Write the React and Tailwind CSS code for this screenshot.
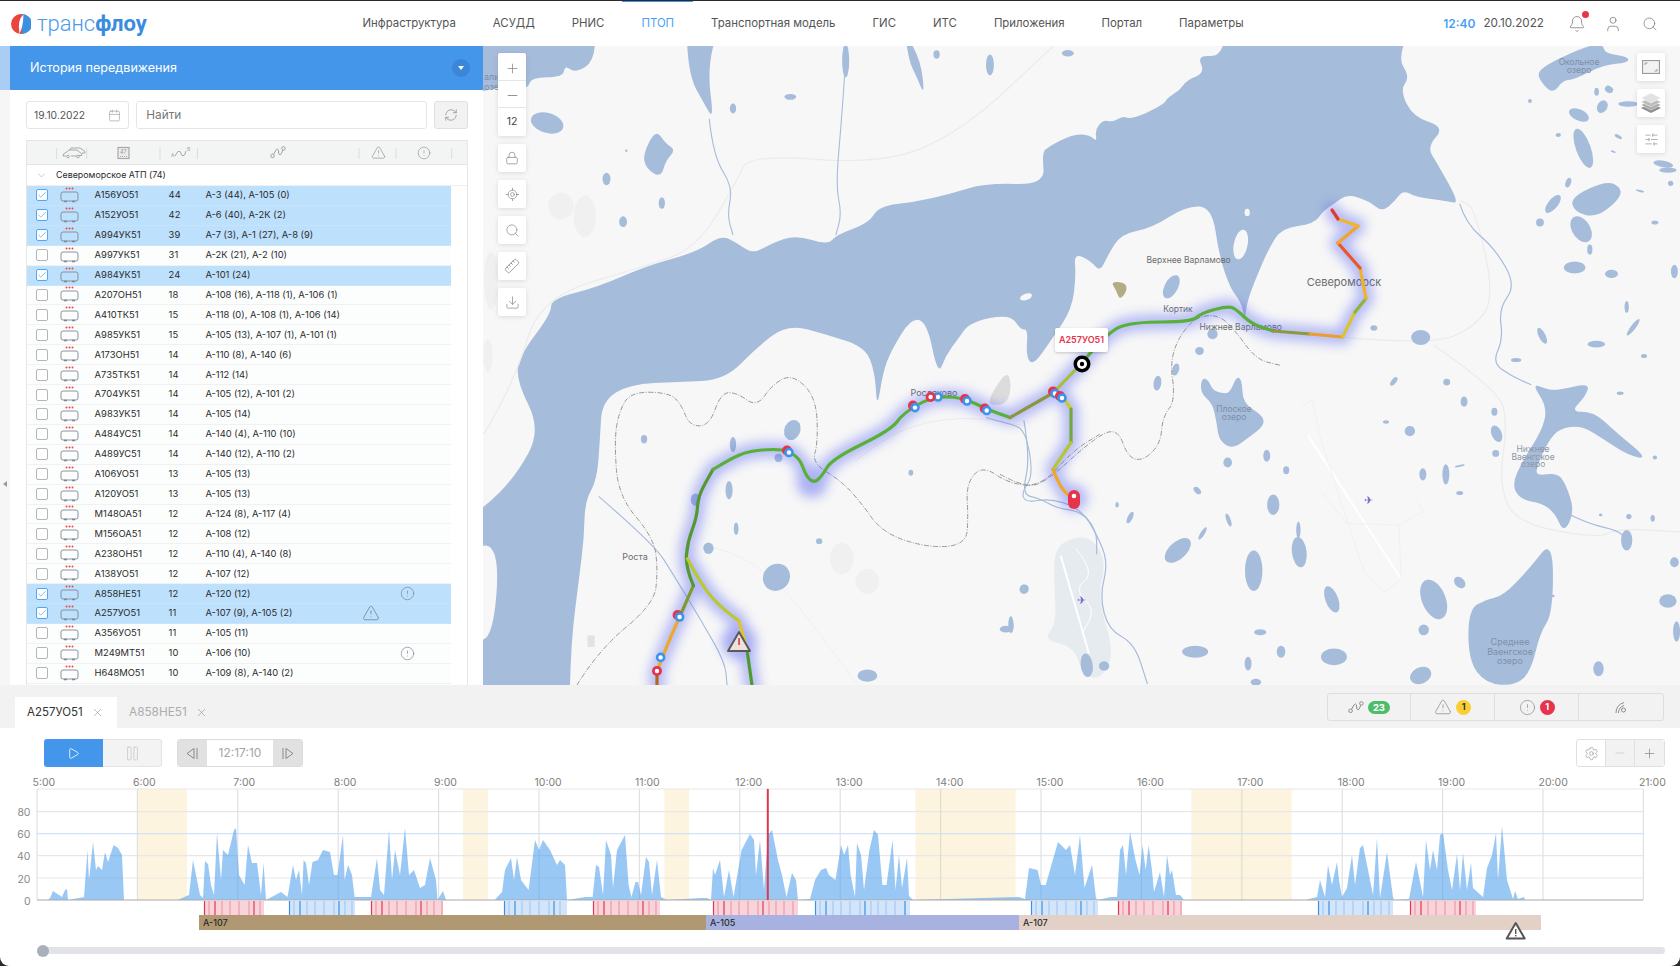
/**
 * История передвижения - ПТОП screen: vehicle list, map and speed timeline
 */
import React from 'react';
import {
  Plus, Minus, Lock, LocateFixed, Search, Ruler, Download, Bell, User, RefreshCw,
  Calendar, X, Play, Pause, Settings, TriangleAlert, CircleAlert, ChevronDown,
  SlidersHorizontal, Check,
} from 'lucide-react';

const NAV = ['Инфраструктура', 'АСУДД', 'РНИС', 'ПТОП', 'Транспортная модель', 'ГИС', 'ИТС', 'Приложения', 'Портал', 'Параметры'];

const ROWS = [
  ['А156УО51', 44, 'А-3 (44), А-105 (0)', 1],
  ['А152УО51', 42, 'А-6 (40), А-2К (2)', 1],
  ['А994УК51', 39, 'А-7 (3), А-1 (27), А-8 (9)', 1],
  ['А997УК51', 31, 'А-2К (21), А-2 (10)', 0],
  ['А984УК51', 24, 'А-101 (24)', 1],
  ['А207ОН51', 18, 'А-108 (16), А-118 (1), А-106 (1)', 0],
  ['А410ТК51', 15, 'А-118 (0), А-108 (1), А-106 (14)', 0],
  ['А985УК51', 15, 'А-105 (13), А-107 (1), А-101 (1)', 0],
  ['А173ОН51', 14, 'А-110 (8), А-140 (6)', 0],
  ['А735ТК51', 14, 'А-112 (14)', 0],
  ['А704УК51', 14, 'А-105 (12), А-101 (2)', 0],
  ['А983УК51', 14, 'А-105 (14)', 0],
  ['А484УС51', 14, 'А-140 (4), А-110 (10)', 0],
  ['А489УС51', 14, 'А-140 (12), А-110 (2)', 0],
  ['А106УО51', 13, 'А-105 (13)', 0],
  ['А120УО51', 13, 'А-105 (13)', 0],
  ['М148ОА51', 12, 'А-124 (8), А-117 (4)', 0],
  ['М156ОА51', 12, 'А-108 (12)', 0],
  ['А238ОН51', 12, 'А-110 (4), А-140 (8)', 0],
  ['А138УО51', 12, 'А-107 (12)', 0],
  ['А858НЕ51', 12, 'А-120 (12)', 1, 'info'],
  ['А257УО51', 11, 'А-107 (9), А-105 (2)', 1, 'warn'],
  ['А356УО51', 11, 'А-105 (11)', 0],
  ['М249МТ51', 10, 'А-106 (10)', 0, 'info'],
  ['Н648МО51', 10, 'А-109 (8), А-140 (2)', 0],
  ['', '', '', 0],
];

function BusIcon() {
  return (
    <svg width="19" height="17" viewBox="0 0 19 17" fill="none">
      <circle cx="6.5" cy="1.5" r="1" fill="#ef4444" />
      <circle cx="9.5" cy="1.5" r="1" fill="#ef4444" />
      <circle cx="12.5" cy="1.5" r="1" fill="#ef4444" />
      <path d="M3 5h13q2 0 2 2v5q0 2-2 2H3q-2 0-2-2V7q0-2 2-2z" stroke="#7d8894" strokeWidth="0.9" />
      <path d="M4 14.500h3M12 14.500h3" stroke="#7d8894" strokeWidth="1.300" />
    </svg>
  );
}

function RouteGlyph({ size = 16 }) {
  return (
    <svg width={size} height={size * 0.8} viewBox="0 0 16 13" fill="none" stroke="currentColor" strokeWidth="1">
      <circle cx="2.500" cy="10" r="1.800" />
      <circle cx="13.500" cy="2.500" r="1.800" />
      <path d="M3.500 8.500L6 4q1.500-2 2.500 0l.3 4q1 2 2.500 0L12.800 4.300" />
    </svg>
  );
}

function CheckBox({ checked }) {
  return (
    <div className={`w-[12px] h-[12px] rounded-[2px] border flex items-center justify-center bg-white ${checked ? 'border-[#55a5f0]' : 'border-[#b5b5b5]'}`}>
      {checked ? <Check size={10} strokeWidth={1.5} className="text-[#3f94ea]" /> : null}
    </div>
  );
}

function VehicleRow({ row }) {
  const [plate, count, routes, checked, flag] = row;
  return (
    <div className={`w-[424px] grid grid-cols-[33px_34.6px_74px_36.8px_150.6px_30px_44px] items-center h-[19.92px] shrink-0 border-b text-[9.400px] text-[#2b2b2b] ${checked ? 'bg-[#bde0fd] border-[#c6e4fd]' : 'bg-[#fcfdfd] border-[#f1f1f1]'}`}>
      <div className="pl-[9px]"><CheckBox checked={checked} /></div>
      <BusIcon />
      <div>{plate}</div>
      <div>{count}</div>
      <div className="whitespace-nowrap">{routes}</div>
      <div className="flex justify-center">{flag === 'warn' ? <TriangleAlert size={18} strokeWidth={1} className="text-[#6f7d8b]" /> : null}</div>
      <div className="flex justify-center">{flag === 'info' ? <CircleAlert size={15} strokeWidth={1} className="text-[#6f7d8b]" /> : null}</div>
    </div>
  );
}

function TableHead() {
  return (
    <div className="relative h-[24px] shrink-0 bg-[#f3f4f4] border-b border-[#e4e4e4] text-[#a3a3a3]">
      <svg className="absolute inset-0" width="442" height="24" viewBox="26 140 442 24" fill="none" stroke="#a8a8a8" strokeWidth="1">
        {[55.7, 85.7, 159, 196.4, 358, 395, 450.7].map((x) => (
          <line key={x} x1={x} x2={x} y1="147" y2="158" stroke="#dcdcdc" />
        ))}
        <path d="M62 155q0-3 3-3.500l3-2.500h8l3 2.500q2 0.500 2 3h-3M62 155h3M70 155h6" />
        <path d="M69 149l1-2h9l3 2q2 .5 2 3h-3" />
        <circle cx="67" cy="155.500" r="1.300" /><circle cx="77" cy="155.500" r="1.300" />
        <rect x="117" y="146.500" width="11" height="11" strokeWidth="1.200" fill="#ececec" />
        <path d="M119 155.500h7" strokeDasharray="1 1" />
        <path d="M174 155l2.500-4q1.500-1.500 3 0l1 3q1.500 1.500 3 0l1.500-4" />
        <text x="170" y="156" fontSize="5" fill="#a8a8a8" stroke="none">A</text>
        <text x="186" y="150" fontSize="5" fill="#a8a8a8" stroke="none">B</text>
        <text x="119" y="152.500" fontSize="5.500" fill="#999" stroke="none">47</text>
      </svg>
      <div className="absolute left-[243px] top-[5px] text-[#a0a0a0]"><RouteGlyph size={16} /></div>
      <TriangleAlert size={15} strokeWidth={1} className="absolute left-[343.500px] top-[3.500px] text-[#8b8b8b]" />
      <CircleAlert size={14} strokeWidth={1} className="absolute left-[390px] top-[4.500px] text-[#8b8b8b]" />
    </div>
  );
}

function SidePanel() {
  return (
    <div className="w-[483px] h-full shrink-0 flex bg-[#f6f6f6]">
      <div className="w-[10px] h-full shrink-0 flex flex-col relative">
        <div className="h-[44px] bg-[#a9cdf3]" />
        <div className="absolute left-[3px] top-[435px] w-0 h-0 border-y-[3px] border-y-transparent border-r-[4px] border-r-[#9a9a9a]" />
      </div>
      <div className="flex-1 min-w-0 flex flex-col bg-white overflow-hidden">
        <div className="h-[44px] shrink-0 bg-[#4496ea] flex items-center pl-[20px] pr-[13px] justify-between">
          <span className="text-white text-[12.600px]">История передвижения</span>
          <div className="w-[18px] h-[18px] rounded-full bg-[#3a86d8] flex items-center justify-center">
            <div className="w-0 h-0 border-x-[3.500px] border-x-transparent border-t-[4px] border-t-white" />
          </div>
        </div>
        <div className="flex-1 min-h-0 flex flex-col pt-[11px] pl-[16px] pr-[15px]">
          <div className="flex gap-[7.500px] h-[28px] shrink-0">
            <div className="w-[103px] border border-[#e5e5e5] rounded-[3px] flex items-center justify-between px-[7px] pt-px text-[10.300px] text-[#555]">
              <span>19.10.2022</span>
              <Calendar size={13} strokeWidth={1} className="text-[#8a8a8a]" />
            </div>
            <div className="w-[291px] border border-[#e5e5e5] rounded-[3px] flex items-center px-[9px] pt-px text-[11.800px] text-[#777]">Найти</div>
            <div className="w-[34px] border border-[#e0e0e0] rounded-[3px] bg-[#f2f2f2] flex items-center justify-center">
              <RefreshCw size={14} strokeWidth={1.200} className="text-[#8b8b8b]" />
            </div>
          </div>
          <div className="mt-[11px] flex-1 min-h-0 flex flex-col border-x border-t border-[#e6e6e6] overflow-hidden">
            <TableHead />
            <div className="h-[21px] shrink-0 flex items-center border-b border-[#f0f0f0] text-[8.900px] text-[#2b2b2b]">
              <ChevronDown size={11} strokeWidth={1} className="ml-[9px] mr-[9px] text-[#8a8a8a]" />
              <span>Североморское АТП (74)</span>
            </div>
            {ROWS.map((r, i) => <VehicleRow key={i} row={r} />)}
          </div>
        </div>
      </div>
    </div>
  );
}

const LAKES_Z7 = [
  [395, 375, 16, 36, 20], [405, 620, 8, 18, 10], [363, 660, 9, 22, 5], [490, 515, 12, 15, 0], [460, 565, 10, 12, 0],
  [970, 525, 22, 22, 0], [862, 497, 8, 8, 0], [908, 655, 6, 14, 30], [1030, 657, 8, 10, 0], [1070, 715, 8, 15, 0],
  [945, 802, 12, 15, 0], [890, 775, 7, 5, 0], [1140, 745, 7, 12, 0], [1145, 810, 12, 25, -15], [1143, 868, 8, 10, 0],
  [1028, 930, 8, 30, 0], [975, 930, 8, 18, 0], [1060, 985, 8, 6, 0], [615, 875, 8, 18, 0], [525, 895, 10, 15, 0],
  [660, 918, 7, 12, 0], [455, 978, 7, 12, -30], [630, 1020, 14, 30, 0], [300, 1058, 6, 18, 20], [270, 1020, 4, 8, 0],
  [527, 1065, 5, 20, -15], [467, 1105, 5, 20, 25], [410, 1155, 22, 42, 35], [585, 1215, 20, 60, 0], [690, 1160, 17, 45, -5],
  [688, 1095, 5, 25, 0], [765, 1300, 15, 40, -15], [1000, 1300, 28, 60, -15], [1060, 1250, 12, 18, -25], [977, 1390, 12, 16, 0],
  [600, 1397, 14, 9, 0], [450, 1455, 30, 18, 0], [770, 1470, 30, 25, 0], [648, 1455, 10, 18, 0], [572, 1490, 8, 20, 0],
  [1380, 1505, 12, 22, 0], [970, 1525, 28, 22, -50], [1540, 1305, 20, 20, 0], [1560, 1395, 8, 30, 0], [1445, 1125, 13, 30, 0],
  [1555, 1190, 10, 15, 0], [1505, 1060, 5, 10, 0], [1450, 1055, 6, 8, 0], [1360, 265, 6, 15, 0], [1250, 520, 8, 25, -20],
  [1340, 205, 22, 40, -20], [1325, 318, 25, 18, 0], [1410, 337, 15, 12, 0], [1445, 435, 5, 18, 0], [1460, 495, 6, 28, 30],
  [1245, 185, 9, 12, 0], [1275, 130, 12, 30, 30], [1375, 545, 20, 10, 0], [1540, 30, 20, 8, 0], [1190, 592, 12, 6, 0],
  [1485, 580, 7, 6, 0], [1510, 185, 8, 6, 0], [1430, 690, 8, 5, 0], [1555, 330, 8, 20, 0], [1510, 880, 5, 6, 0],
  [55, 1270, 10, 14, 0], [25, 1375, 6, 25, 0], [200, 1495, 14, 35, -5], [240, 1497, 12, 14, 0],
  [590, 1545, 12, 10, 0], [1385, 1050, 4, 4, 0], [1275, 1290, 4, 4, 0], [1060, 905, 12, 3, -15],
];

const LAKES_Z6 = [
  [170, 200, 42, 24, 15], [925, 50, 9, 40, 0], [1155, 35, 8, 10, 0], [1290, 60, 10, 25, 0], [1487, 32, 15, 8, 0],
  [640, 165, 8, 12, 0], [785, 137, 15, 7, 0], [320, 335, 10, 15, 0], [460, 393, 8, 14, 0], [362, 438, 10, 13, 0],
  [370, 267, 3, 3, 0], [790, 940, 20, 25, 25], [640, 975, 8, 18, 0], [415, 962, 8, 10, 0], [630, 1085, 9, 22, 0],
  [545, 1108, 12, 15, 0], [648, 1178, 6, 15, 0], [578, 1225, 13, 14, 0], [750, 1295, 35, 32, -30], [1090, 1043, 6, 7, 0],
  [858, 1208, 8, 7, 0], [1378, 1323, 10, 10, 0], [1330, 1420, 15, 8, 0], [1345, 1412, 5, 15, 0], [980, 1532, 25, 15, 0],
  [755, 1007, 10, 10, 0], [1535, 1510, 10, 25, 0],
];

const LAKES_Z3 = [
  [1137, 345, 32, 17, 25], [1190, 275, 7, 12, 0], [1227, 268, 13, 10, 30], [1207, 320, 15, 20, 30], [1285, 312, 30, 8, 0],
  [1150, 445, 22, 62, -20], [1075, 405, 8, 6, 0], [1255, 410, 12, 5, 30], [1390, 492, 30, 10, 10], [1412, 550, 8, 8, 0],
  [990, 303, 6, 6, 0], [1240, 455, 8, 3, 20], [1105, 548, 8, 15, 20], [1320, 573, 13, 3, 15],
];

const GREEN = '#58b036';
const SEGS = [
  [[[657, 690], [657, 671]], '#b4661f'],
  [[[657, 671], [668, 643], [679.600, 617]], '#eda92a'],
  [[[679.600, 617], [693.400, 585.600]], '#7f9a2f'],
  [[[693.400, 585.600], [685.500, 567], [687.500, 542], [697, 517], [698, 496], [713, 469.500]], '#55982f'],
  [[[713, 469.500], [730, 459], [749, 451], [775, 449], [788, 451], [800, 459], [806, 476], [814, 483], [822, 476], [832, 459], [891, 430], [903, 413.500], [930.600, 397], [962, 397], [986, 409], [1010, 417.600]], GREEN],
  [[[1010, 417.600], [1053, 393]], '#8d963f'],
  [[[1063, 397], [1071, 409]], '#c9c932'],
  [[[1071, 409], [1071, 442.500]], '#73a93a'],
  [[[1071, 442.500], [1053, 469.500]], '#b6c436'],
  [[[1053, 469.500], [1060, 488], [1073, 498.500]], '#efa62a'],
  [[[1053, 393], [1082, 363]], '#a5bf38'],
  [[[1082, 363], [1108, 331], [1134, 322], [1191, 322], [1201.600, 313], [1227.700, 306], [1236, 309], [1251.500, 324], [1273, 331]], GREEN],
  [[[1273, 331], [1310, 334]], '#8e9a3a'],
  [[[1310, 334], [1342.600, 337]], '#ec9f2a'],
  [[[1342.600, 337], [1355, 312]], '#d9c431'],
  [[[1355, 312], [1366, 298.600]], '#8fb338'],
  [[[1366, 298.600], [1360, 268]], '#edb32c'],
  [[[1360, 268], [1338, 243]], '#e9582c'],
  [[[1338, 243], [1358, 226]], '#f0a52b'],
  [[[1358, 226], [1338, 219]], '#f0b52c'],
  [[[1338, 219], [1332, 210]], '#e5392f'],
  [[[687.500, 558.700], [701, 583.600], [717, 604], [739, 621]], '#b9c92f'],
  [[[739, 621], [747, 650]], '#dcc52e'],
  [[[747, 650], [752.700, 690]], '#4f9a2f'],
];

const PINS = [
  [789, 452.500, 1], [915, 407.600, 1], [938, 397, 2], [930.600, 397, 0], [967, 401, 1], [986.700, 410.500, 1],
  [1055, 393.500, 1], [1062, 398, 1], [679.600, 617, 1], [660.600, 657.400, 2], [657, 671, 0],
];

const parse = (s) => s.trim().split(/\s+/).map((p) => p.split(',').map(Number));
const mid = (a, b) => [(a[0] + b[0]) / 2, (a[1] + b[1]) / 2];

// Скругляет ломаную: углы становятся кривыми через середины сторон
function smooth(points, closed) {
  const p = typeof points === 'string' ? parse(points) : points;
  if (p.length < 3) return `M${p.map((q) => q.join(' ')).join('L')}`;
  if (closed) {
    const first = mid(p[p.length - 1], p[0]);
    let d = `M${first[0]} ${first[1]}`;
    p.forEach((q, i) => {
      const m = mid(q, p[(i + 1) % p.length]);
      d += `Q${q[0]} ${q[1]} ${m[0]} ${m[1]}`;
    });
    return `${d}Z`;
  }
  let d = `M${p[0][0]} ${p[0][1]}`;
  for (let i = 1; i < p.length - 1; i += 1) {
    const m = mid(p[i], p[i + 1]);
    d += `Q${p[i][0]} ${p[i][1]} ${m[0]} ${m[1]}`;
  }
  const last = p[p.length - 1];
  return `${d}L${last[0]} ${last[1]}`;
}

const Blob = ({ points, fill }) => <path d={smooth(points, true)} fill={fill} />;
const Line = ({ points, ...rest }) => <path d={smooth(points, false)} fill="none" vectorEffect="non-scaling-stroke" {...rest} />;

function Pin({ x, y, kind }) {
  if (kind === 0) {
    return (
      <g>
        <circle cx={x} cy={y} r="5" fill="#e6344c" />
        <circle cx={x} cy={y} r="2.200" fill="#fff" />
      </g>
    );
  }
  return (
    <g>
      {kind === 1 ? <circle cx={x - 2} cy={y - 2} r="5" fill="#e6344c" /> : null}
      <circle cx={x} cy={y} r="4.800" fill="#3d93ea" />
      <circle cx={x} cy={y} r="2.200" fill="#fff" />
    </g>
  );
}

function MapCanvas() {
  const W = '#a6bcdb';
  const T = { fontSize: 9, fill: '#6d6d6d', textAnchor: 'middle' };
  const LIGHT = '#ebebeb';
  return (
    <svg className="absolute inset-0 w-full h-full" viewBox="483 46 1197 639" preserveAspectRatio="none" fill="none">
      <defs>
        <filter id="blur" x="-20%" y="-20%" width="140%" height="140%"><feGaussianBlur stdDeviation="6" /></filter>
      </defs>
      <rect x="483" y="46" width="1197" height="639" fill="#f7f7f7" />
      {/* залив */}
      <Blob fill={W} points="551,299 598,287 646,266 697,252 721,235 737,243 753,254 772,243 796,235 828,245 836,235 869,223 879,206 915,202 950,194 986,183 1045,185 1042,153 1048,147 1073,134 1090,135 1097,142 1095,130 1103,120 1113,122 1123,116 1130,119 1147,113 1165,103 1167,98 1180,90 1187,80 1205,73 1197,55 1223,57 1228,10 1420,10 1397,57 1410,77 1400,90 1413,117 1445,127 1427,147 1437,163 1460,204 1447,201 1416,197 1403,190 1395,201 1382,212 1369,201 1347,194 1334,204 1323,211 1314,224 1282,228 1269,248 1256,278 1247,302 1245,320 1241,302 1230,288 1219,255 1212,207 1186,206 1152,228 1121,234 1108,255 1100,272 1091,261 1074,253 1076,275 1072,309 1052,339 1033,366 1026,356 1028,329 1021,330 1010,314 970,322 958,339 946,355 938,376 927,322 911,318 891,351 883,372 877,410 875,372 865,347 828,335 788,324 757,347 725,380 678,382 630,384 602,401 600,438 597,480 585,501 584,538 579,579 571,642 569,730 430,730 430,545 483,509 516,476 541,430 516,380 520,355 551,314" />
      <Blob fill="#f7f7f7" points="470,545 500,546 493,640 470,640" />
      <g fill="#f7f7f7" transform="translate(1000 160) scale(0.4337 0.338)">
        <ellipse cx="555" cy="250" rx="16" ry="44" transform="rotate(8 555 250)" />
        <ellipse cx="60" cy="405" rx="15" ry="9" transform="rotate(-30 60 405)" />
        <ellipse cx="570" cy="155" rx="6" ry="11" />
      </g>
      {/* леса и дороги */}
      <g transform="translate(480 40) scale(0.3953 0.4149)">
        <g fill="#f0f0f0">
          <ellipse cx="205" cy="400" rx="32" ry="32" />
          <ellipse cx="265" cy="425" rx="28" ry="50" />
          <ellipse cx="28" cy="580" rx="18" ry="70" />
          <ellipse cx="20" cy="760" rx="12" ry="40" />
          <ellipse cx="915" cy="1250" rx="30" ry="38" />
          <ellipse cx="980" cy="1305" rx="30" ry="30" />
        </g>
        <Blob fill="#dcdcdc" points="1295,850 1335,795 1345,840 1330,880 1285,880" />
        <rect x="272" y="1435" width="18" height="28" fill="#e2e2e2" />
        <Line points="10,950 90,820 150,620 420,545 550,500 650,340 680,275 1020,300 1220,220 1450,15" stroke={LIGHT} strokeWidth="1.200" />
        <Line points="560,1220 700,1230 960,1560" stroke="#f0f0f0" strokeWidth="1" />
        <Line points="950,1015 1040,940 1220,905 1380,930" stroke={LIGHT} strokeWidth="1" />
      </g>
      <g transform="translate(1000 160) scale(0.4337 0.338)">
        <Line points="790,525 1000,548 1100,490 1140,400 1095,140 1060,120" stroke={LIGHT} strokeWidth="1.200" />
        <Line points="1000,548 1150,680 1170,780 1150,960 1190,1075 1380,1120 1420,1090 1568,1100" stroke={LIGHT} strokeWidth="1.200" />
        {/* аэродромы */}
        <Blob fill="#e6ebf0" points="125,1150 170,1115 215,1120 245,1190 225,1300 265,1460 230,1540 190,1520 170,1440 100,1420 130,1370 125,1260" />
        <line x1="140" y1="1170" x2="205" y2="1460" stroke="#fff" strokeWidth="2" vectorEffect="non-scaling-stroke" />
        <Line points="175,1150 220,1220 170,1270 220,1330 190,1400" stroke="#fff" strokeWidth="1" />
        <line x1="710" y1="815" x2="925" y2="1240" stroke="#fff" strokeWidth="2.200" vectorEffect="non-scaling-stroke" />
        <polyline points="695,730 720,710 740,830 840,1220 885,1280 925,1240 920,1080 975,1040 960,1005" stroke="#f1f1f1" strokeWidth="1" vectorEffect="non-scaling-stroke" />
        <polyline points="740,980 800,1075 920,1080" stroke="#f1f1f1" strokeWidth="1" vectorEffect="non-scaling-stroke" />
      </g>
      {/* озёра и реки */}
      <g transform="translate(480 40) scale(0.3953 0.4149)" fill={W}>
        <Blob fill={W} points="-80,-60 290,-60 292,50 240,80 215,60 210,90 130,90 120,120 60,110 8,125 -80,125" />
        <Blob fill={W} points="520,-40 605,-40 575,70 592,195 565,150 530,90" />
        <Blob fill={W} points="1075,-20 1115,50 1125,135 1105,90 1085,50" />
        <Blob fill={W} points="445,215 470,250 495,265 470,290 458,332 420,310 412,275" />
        {LAKES_Z6.map(([x, y, rx, ry, r], i) => (
          <ellipse key={i} cx={x} cy={y} rx={rx} ry={ry} transform={`rotate(${r} ${x} ${y})`} />
        ))}
        <g stroke={W} strokeWidth="1.100" strokeLinejoin="round">
          <Line points="580,190 590,280 640,355 625,420 640,470" />
          <Line points="925,50 915,190 900,350 915,420 900,470" />
          <Line points="300,1100 440,1215 490,1290 560,1400 620,1500 625,1555" />
          <Line points="1280,910 1340,925 1380,940 1400,1050 1370,1090 1380,1115 1440,1105 1510,1125 1560,1180 1560,1240" />
        </g>
      </g>
      <g transform="translate(1000 160) scale(0.4337 0.338)" fill={W}>
        <Blob fill={W} points="465,645 480,650 490,680 510,690 530,690 545,640 558,650 560,720 605,755 610,785 570,825 535,855 505,830 500,780 490,720 462,690" />
        <Blob fill={W} points="1275,1120 1275,1340 1245,1400 1225,1510 1190,1555 1120,1550 1080,1480 1080,1330 1120,1300 1160,1290 1220,1210" />
        <Blob fill={W} points="1225,660 1265,680 1290,680 1360,660 1350,700 1315,745 1370,745 1420,805 1495,885 1450,875 1390,825 1340,785 1290,795 1265,830 1240,900 1235,935 1285,925 1305,960 1325,1040 1300,1105 1280,1045 1250,1015 1200,1005 1180,960 1205,890 1250,800 1262,730" />
        <Blob fill={W} points="1315,110 1400,60 1435,85 1425,120 1375,170 1325,155" />
        <Blob fill="#b3ad86" points="255,360 288,362 294,385 276,415 268,385" />
        {LAKES_Z7.map(([x, y, rx, ry, r], i) => (
          <ellipse key={i} cx={x} cy={y} rx={rx} ry={ry} transform={`rotate(${r} ${x} ${y})`} />
        ))}
        <g stroke={W} strokeWidth="1.200" strokeLinejoin="round">
          <Line points="1060,130 1075,190 1140,260 1190,370 1150,440 1160,530 1135,600 1180,640 1225,665" />
          <Line points="1300,1040 1350,1075 1440,1100 1440,1150" />
          <Line points="55,770 70,880 50,990 90,1000 130,1030 190,1040 220,1100 250,1190 230,1290 250,1390 310,1430 340,1550" />
        </g>
      </g>
      <g transform="translate(1200 0) scale(0.3333)" fill={W}>
        <Blob fill={W} points="1010,220 1040,195 1090,170 1170,135 1210,135 1215,160 1285,170 1285,188 1210,195 1120,240 1090,240 1060,280 1030,255" />
        {LAKES_Z3.map(([x, y, rx, ry, r], i) => (
          <ellipse key={i} cx={x} cy={y} rx={rx} ry={ry} transform={`rotate(${r} ${x} ${y})`} />
        ))}
      </g>
      {/* железная дорога */}
      <g stroke="#8d8d8d" strokeWidth="0.900" strokeDasharray="5 1.500 1 1.500" strokeLinejoin="round">
        <g transform="translate(480 40) scale(0.3953 0.4149)">
          <Line points="245,1555 300,1470 440,1360 450,1280 440,1200 350,1100 340,970 350,900 380,848 480,850 510,880 530,930 580,930 610,850 650,850 700,885 740,830 790,805 850,860 855,970 840,1020 910,1060 960,1110 1020,1190 1140,1225 1230,1215 1235,1150 1230,1070 1270,1025 1340,1070 1420,1075 1500,990 1568,950" />
        </g>
        <g transform="translate(1000 160) scale(0.4337 0.338)">
          <Line points="0,930 50,965 100,960 210,830 270,790 295,880 330,890 370,840 375,760 405,710 390,580 440,470 500,455 540,500 590,590 645,607" />
        </g>
      </g>
      {/* подписи */}
      <text x="484" y="80" fontSize="9" fill="#7c8ea8">алин</text>
      <text x="484" y="90" fontSize="9" fill="#7c8ea8">озер</text>
      <text x="1579" y="65" fontSize="8.500" fill="#7f8fa6" textAnchor="middle">Окольное</text>
      <text x="1579" y="73" fontSize="8.500" fill="#7f8fa6" textAnchor="middle">озеро</text>
      <text x="635" y="560" {...T}>Роста</text>
      <text x="934" y="396" {...T}>Росляково</text>
      <text x="1188.600" y="263" {...T} fontSize="8.500">Верхнее Варламово</text>
      <text x="1178" y="312" {...T} fontSize="8.500">Кортик</text>
      <text x="1240.700" y="330" {...T} fontSize="8.500">Нижнее Варламово</text>
      <text x="1344" y="286" fontSize="11" fill="#6d6d6d" textAnchor="middle">Североморск</text>
      <text x="1234" y="412" fontSize="8.500" fill="#7f8fa6" textAnchor="middle">Плоское</text>
      <text x="1234" y="420" fontSize="8.500" fill="#7f8fa6" textAnchor="middle">озеро</text>
      <text x="1533" y="452" fontSize="8.500" fill="#8c98a8" textAnchor="middle">Нижнее</text>
      <text x="1533" y="460" fontSize="8.500" fill="#8c98a8" textAnchor="middle">Ваенгское</text>
      <text x="1533" y="467" fontSize="8.500" fill="#8c98a8" textAnchor="middle">озеро</text>
      <text x="1510" y="645" fontSize="9" fill="#7f8fa6" textAnchor="middle">Среднее</text>
      <text x="1510" y="655" fontSize="9" fill="#7f8fa6" textAnchor="middle">Ваенгское</text>
      <text x="1510" y="664" fontSize="9" fill="#7f8fa6" textAnchor="middle">озеро</text>
      {/* самолёты */}
      <text x="1081.500" y="604" fontSize="11" fill="#7a5fc8" textAnchor="middle">✈</text>
      <text x="1368.600" y="504" fontSize="11" fill="#7a5fc8" textAnchor="middle">✈</text>
      {/* маршрут */}
      <g filter="url(#blur)" opacity="0.4" stroke="#4a58f0" strokeWidth="15" strokeLinejoin="round" strokeLinecap="round">
        {SEGS.map(([p], i) => <path key={i} d={smooth(p, false)} />)}
        <circle cx="812" cy="482" r="8" fill="#3a48f0" stroke="#3a48f0" />
        <circle cx="739" cy="642" r="10" fill="#2f3cf0" stroke="#2f3cf0" />
        <circle cx="1074" cy="498" r="6" fill="#3a48f0" />
      </g>
      <g strokeWidth="3.200" strokeLinejoin="round" strokeLinecap="round">
        {SEGS.map(([p, c], i) => <path key={i} d={smooth(p, false)} stroke={c} />)}
      </g>
      {PINS.map(([x, y, k], i) => <Pin key={i} x={x} y={y} kind={k} />)}
      <path d="M739 632l11 19h-22z" fill="#eee2da" stroke="#5a5a5a" strokeWidth="2" strokeLinejoin="round" />
      <rect x="738.300" y="638" width="1.500" height="7" fill="#d9303f" />
      <rect x="1068" y="490" width="12" height="19" rx="6" fill="#e6344c" />
      <circle cx="1074" cy="496" r="2.300" fill="#fff" />
      <circle cx="1082" cy="364" r="8.500" fill="#000" />
      <circle cx="1082" cy="364" r="5" fill="#fff" />
      <circle cx="1082" cy="364" r="2.200" fill="#000" />
    </svg>
  );
}

function MapBtn({ children, className = '' }) {
  return <div className={`w-[28px] h-[28px] bg-white rounded-[2px] shadow-[0_1px_5px_rgba(0,0,0,0.12)] flex items-center justify-center text-[#8d8d8d] ${className}`}>{children}</div>;
}

function MapPanel() {
  return (
    <div className="relative flex-1 min-w-0 h-full overflow-hidden bg-[#f7f7f7]">
      <MapCanvas />
      {/* подпись машины */}
      <div className="absolute left-[572px] top-[282px] w-[53px] h-[24px] bg-white rounded-[2px] shadow-[0_1px_3px_rgba(0,0,0,0.2)] flex items-center justify-center text-[9px] font-semibold text-[#e6344c]">А257УО51</div>
      <div className="absolute left-[15px] top-[7px] flex flex-col gap-[8px]">
        <div className="flex flex-col rounded-[2px] shadow-[0_1px_5px_rgba(0,0,0,0.12)] bg-white w-[28px] text-[#8d8d8d]">
          <div className="h-[28px] pt-[3px] flex items-center justify-center border-b border-[#e6e6e6]"><Plus size={15} strokeWidth={1.300} /></div>
          <div className="h-[27px] pt-[2px] flex items-center justify-center border-b border-[#e6e6e6]"><Minus size={15} strokeWidth={1.500} /></div>
          <div className="h-[28px] flex items-center justify-center text-[10.500px] text-[#444]">12</div>
        </div>
        <MapBtn><Lock size={14} strokeWidth={1.300} /></MapBtn>
        <MapBtn><LocateFixed size={15} strokeWidth={1.200} /></MapBtn>
        <MapBtn><Search size={15} strokeWidth={1.200} /></MapBtn>
        <MapBtn><Ruler size={16} strokeWidth={1.200} className="-scale-x-100" /></MapBtn>
        <MapBtn><Download size={15} strokeWidth={1.200} /></MapBtn>
      </div>
      <div className="absolute right-[15px] top-[7px] flex flex-col gap-[8px]">
        <MapBtn>
          <svg width="18" height="14" viewBox="0 0 18 14" fill="none" stroke="#9a9a9a">
            <rect x="0.500" y="0.500" width="17" height="13" strokeWidth="1.200" fill="#f3f3f3" />
            <path d="M3 5V3h2.500M15 9v2h-2.500" />
          </svg>
        </MapBtn>
        <MapBtn>
          <svg width="22" height="20" viewBox="0 0 22 20">
            <path d="M11 10L1 15l10 5 10-5z" fill="#8f8f8f" />
            <path d="M11 7L1 12l10 5 10-5z" fill="#a8a8a8" stroke="#fff" strokeWidth="0.500" />
            <path d="M11 4L1 9l10 5 10-5z" fill="#bdbdbd" stroke="#fff" strokeWidth="0.500" />
            <path d="M11 0L1 5l10 5 10-5z" fill="#e2e2e2" stroke="#fff" strokeWidth="0.500" />
          </svg>
        </MapBtn>
        <MapBtn><SlidersHorizontal size={15} strokeWidth={1.100} /></MapBtn>
      </div>
    </div>
  );
}

const AREA = [
  [37, 0], [48, 0], [50, 2], [53, 9], [62, 3], [65, 10], [67, 11], [68, 0], [84, 3], [87.500, 50], [89, 20], [93, 58], [96, 30], [98, 34], [102, 30], [105, 48], [108, 38], [113.600, 55], [118, 52], [122, 45], [124, 0],
  [177.500, 0], [189, 5], [193, 40], [200, 5], [203, 2], [205, 39], [208, 36], [211, 15], [214, 5], [217, 67], [221, 20], [223, 50], [228, 45], [234, 70], [236, 72], [239, 25], [244.600, 15], [248, 55], [252, 37], [257, 37], [261, 5], [263.600, 37], [266, 0],
  [281, 8], [287.500, 3], [293, 35], [296, 20], [299, 30], [302, 5], [303.600, 40], [306, 37], [309, 15], [312.500, 38], [318, 40], [323, 50], [330, 48], [334, 25], [337.500, 25], [343, 65], [344.600, 20], [348, 35], [352, 25], [354.600, 3], [371, 3], [377, 42], [380, 10], [384, 5], [389, 70], [392, 20], [395, 50], [400, 25], [405, 72], [409, 25], [414, 30], [420, 12], [425, 15], [430, 42], [436, 20], [437.500, 0], [443, 9], [446, 0],
  [494.600, 0], [502, 8], [505, 30], [511, 42], [514, 20], [517, 43], [521, 20], [528.600, 10], [535, 60], [539, 50], [543, 60], [550, 50], [557, 35], [560, 40], [565, 35], [567, 0],
  [585, 3], [592.600, 3], [596, 35], [599, 33], [603, 5], [606, 60], [611, 45], [613, 12], [617, 50], [625, 65], [628.600, 15], [631.400, 3], [635.500, 18], [638, 18], [641, 5], [646, 43], [649, 38], [652, 5], [657, 40], [661, 3], [667, 0],
  [701, 2], [707, 2], [711, 0], [713, 32], [715, 25], [720, 40], [724, 3], [729, 30], [733.500, 3], [741.600, 50], [750, 66], [754, 60], [756, 25], [760, 60], [764, 10], [768, 65], [772, 70], [778, 40], [782, 25], [786.500, 3], [792, 27], [796, 20], [798, 0],
  [810, 1], [815, 20], [821, 30], [826, 32], [829, 25], [835.500, 20], [841, 55], [844, 45], [848, 55], [850.600, 25], [855, 3], [857, 57], [861, 45], [864, 10], [869.400, 50], [874, 70], [878, 65], [882.400, 15], [886.500, 15], [892.600, 60], [895.500, 10], [899, 45], [902, 12], [907, 42], [909, 4], [913, 0],
  [1019, 3], [1025, 1], [1029, 32], [1037.600, 30], [1041, 15], [1045.700, 15], [1050, 30], [1058, 58], [1066, 50], [1070, 55], [1075, 25], [1080, 65], [1084.500, 12], [1092, 35], [1096, 2], [1097.600, 0],
  [1111, 3], [1117, 3], [1120, 50], [1123, 55], [1126, 25], [1130, 68], [1135.500, 40], [1139.600, 25], [1142.500, 55], [1145.700, 30], [1148.600, 55], [1152, 30], [1154, 8], [1160, 28], [1164, 3], [1167, 45], [1170, 25], [1172, 30], [1176, 5], [1180, 5], [1184, 0],
  [1305, 0], [1317, 3], [1320, 20], [1325, 3], [1328, 35], [1332, 15], [1337, 38], [1339, 20], [1342, 3], [1347, 12], [1352, 45], [1355, 15], [1360, 52], [1363, 55], [1368, 30], [1373, 5], [1377, 62], [1380, 2], [1387, 48], [1390, 25], [1393, 3], [1394, 0],
  [1409, 1], [1416, 38], [1423, 3], [1426, 60], [1430, 30], [1433, 50], [1437, 30], [1440, 65], [1443, 67], [1448, 30], [1452, 10], [1457, 46], [1460, 10], [1463, 47], [1467, 10], [1471, 37], [1473, 12], [1483, 3], [1487, 32], [1492, 45], [1496, 67], [1498, 20], [1502, 74], [1507, 20], [1513, 1], [1515, 9], [1518, 1], [1524, 3], [1525, 0], [1643, 0],
];

const STRIPS = [
  [204, 264, 'r'], [289, 355, 'b'], [371, 443, 'r'], [504, 567, 'b'], [593, 660, 'r'], [713, 798, 'r'],
  [815, 910, 'b'], [1031, 1098, 'b'], [1118, 1182, 'r'], [1318, 1393, 'b'], [1410, 1476, 'r'],
];

const STRIP_COLORS = {
  r: { bg: '#f8d3da', tick: '#ee9aa8', dark: '#e2384f' },
  b: { bg: '#d3e5fa', tick: '#a3c8f3', dark: '#3b8fe6' },
};

// Штрихи внутри полос: шаг и тёмные метки заданы от номера штриха
function stripTicks(x0, x1) {
  const out = [{ x: x0 + 0.500, dark: true }];
  let x = x0 + 5;
  let i = 1;
  while (x < x1) {
    out.push({ x, dark: i % 5 === 2 });
    x += 5 + ((i * 7) % 6);
    i += 1;
  }
  return out;
}

const HOURS = Array.from({ length: 17 }, (_, i) => i + 5);
const hx = (h) => 37 + (h - 5) * 100.4;
const BANDS = [[137, 187], [463, 488], [664.500, 689], [915.500, 1015.500], [1191.400, 1291.700]];

function Timeline() {
  const area = `37,900 ${AREA.map(([x, h]) => `${x},${900 - h}`).join(' ')}`;
  return (
    <svg className="block w-[1680px] h-[175px]" viewBox="0 767 1680 175" fill="none">
      {BANDS.map(([a, b]) => <rect key={a} x={a} y="789" width={b - a} height="111" fill="#fdf4df" />)}
      {[789, 811.700, 855.700, 878].map((y) => <line key={y} x1="37" x2="1643" y1={y} y2={y} stroke="#e7e7ea" strokeWidth="1.200" />)}
      <line x1="37" x2="1643" y1="833.700" y2="833.700" stroke="#cfe2f6" strokeWidth="1.200" />
      {HOURS.map((h) => (
        <g key={h}>
          <line x1={hx(h)} x2={hx(h)} y1="789" y2="900" stroke={h === 14 || h === 17 ? '#dfdcd0' : '#e0e1e5'} strokeWidth="1.200" />
          <text x={hx(h) - 4.500} y="786" fontSize="10.500" fill="#808080">{`${h}:00`}</text>
        </g>
      ))}
      {[80, 60, 40, 20, 0].map((v, i) => (
        <text key={v} x="30.500" y={816 + i * 22.200} fontSize="10.500" fill="#8a8a8a" textAnchor="end">{v}</text>
      ))}
      <polygon points={area} fill="#469bec" fillOpacity="0.55" />
      <line x1="37" x2="1643" y1="900" y2="900" stroke="#a9a9a9" strokeWidth="1.200" />
      <line x1="767.800" x2="767.800" y1="789" y2="900" stroke="#e0364e" strokeWidth="2" />
      {STRIPS.map(([a, b, k]) => {
        const c = STRIP_COLORS[k];
        return (
          <g key={a}>
            <rect x={a} y="900.600" width={b - a} height="14.400" fill={c.bg} />
            {stripTicks(a, b).map((t) => (
              <line key={t.x} x1={t.x} x2={t.x} y1="901" y2="915" stroke={t.dark ? c.dark : c.tick} strokeWidth="1.200" />
            ))}
          </g>
        );
      })}
      <rect x="199" y="915" width="507" height="15" fill="#b09872" />
      <rect x="706" y="915" width="313" height="15" fill="#a8b2e0" />
      <rect x="1019" y="915" width="522" height="15" fill="#e3d1c8" />
      <text x="203" y="926" fontSize="9" fontWeight="500" fill="#2b2b2b">А-107</text>
      <text x="710" y="926" fontSize="9" fontWeight="500" fill="#2b2b2b">А-105</text>
      <text x="1023" y="926" fontSize="9" fontWeight="500" fill="#2b2b2b">А-107</text>
      <path d="M1515.700 923l9 15.500h-18z" fill="#fff" stroke="#555" strokeWidth="2" strokeLinejoin="round" />
      <rect x="1515" y="929" width="1.400" height="5" fill="#555" />
      <rect x="1515" y="935" width="1.400" height="1.400" fill="#555" />
    </svg>
  );
}

function TopHeader() {
  return (
    <div className="h-[45px] shrink-0 flex items-center bg-white relative">
      <div className="w-[362.500px] shrink-0 flex items-center pl-[11px] gap-[6px]">
        <svg width="20" height="20" viewBox="0 0 20 20">
          <circle cx="10" cy="10" r="10" fill="#e8453c" />
          <path d="M11 0a10 10 0 0 1 0 20z" fill="#3d8fe0" />
          <path d="M12.500 .5Q6 6 8.500 19.500Q12 14 12.500 .5z" fill="#fff" />
        </svg>
        <span className="font-[Roboto,sans-serif] text-[22px] leading-none font-light text-[#4a9be8]">транс<span className="font-bold text-[#3a8ce0]">флоу</span></span>
      </div>
      <div className="flex gap-[37px] text-[11.400px] text-[#555]">
        {NAV.map((n) => (
          <div key={n} className={`relative whitespace-nowrap ${n === 'ПТОП' ? 'text-[#4a9ff5]' : ''}`}>
            {n}
            {n === 'ПТОП' ? <div className="absolute -left-[19px] -right-[19px] -top-[16px] h-[3px] bg-[#4496ea]" /> : null}
          </div>
        ))}
      </div>
      <div className="ml-auto flex items-center pr-[22px]">
        <span className="text-[12px] font-semibold text-[#4a9ff5]">12:40</span>
        <span className="text-[11.700px] text-[#555] ml-[8px]">20.10.2022</span>
        <div className="relative ml-[24px]">
          <Bell size={18} strokeWidth={1} className="text-[#777]" />
          <div className="absolute -top-[4px] -right-[2.500px] w-[7px] h-[7px] rounded-full bg-[#e6344c]" />
        </div>
        <User size={18} strokeWidth={1} className="text-[#777] ml-[18px]" />
        <Search size={16} strokeWidth={1.100} className="text-[#777] ml-[20px]" />
      </div>
    </div>
  );
}

function TabBar() {
  return (
    <div className="h-[43px] shrink-0 bg-[#f2f2f2] flex justify-between pl-[15px] pr-[16px]">
      <div className="flex items-end">
        <div className="h-[31px] w-[102px] bg-white flex items-center pl-[12px] gap-[8px] text-[11.500px] text-[#333]">
          А257УО51 <X size={13} strokeWidth={1} className="text-[#888]" />
        </div>
        <div className="h-[31px] flex items-center pl-[12px] gap-[8px] text-[11.800px] text-[#adadad]">
          А858НЕ51 <X size={13} strokeWidth={1} className="text-[#888]" />
        </div>
      </div>
      <div className="mt-[8px] h-[28px] w-[337.500px] grid grid-cols-4 border border-[#dedede] rounded-[3px] text-[#8b8b8b]">
        <div className="flex items-center justify-center gap-[4px] border-r border-[#dedede]">
          <RouteGlyph size={16} />
          <span className="h-[13px] px-[5px] rounded-full bg-[#4dbd6b] text-white text-[9.500px] font-bold leading-[13px]">23</span>
        </div>
        <div className="flex items-center justify-center gap-[4px] border-r border-[#dedede]">
          <TriangleAlert size={18} strokeWidth={1} />
          <span className="w-[15px] h-[15px] rounded-full bg-[#fbcf33] text-[#333] text-[9px] font-bold flex items-center justify-center">1</span>
        </div>
        <div className="flex items-center justify-center gap-[4px] border-r border-[#dedede]">
          <CircleAlert size={17} strokeWidth={1} />
          <span className="w-[15px] h-[15px] rounded-full bg-[#e6344c] text-white text-[9px] font-bold flex items-center justify-center">1</span>
        </div>
        <div className="flex items-center justify-center">
          <svg width="13" height="13" viewBox="0 0 13 13" fill="none" stroke="#8b8b8b" strokeWidth="1">
            <circle cx="8.500" cy="9" r="2" />
            <path d="M1 12Q1 4 9 1.500M3.500 12Q3.500 6.500 9 4.500" />
          </svg>
        </div>
      </div>
    </div>
  );
}

function Controls() {
  return (
    <div className="h-[28px] mt-[11px] flex justify-between pl-[44px] pr-[15px]">
      <div className="flex gap-[15px]">
        <div className="flex">
          <div className="w-[59px] bg-[#4496ea] rounded-l-[3px] flex items-center justify-center"><Play size={13} strokeWidth={1.500} className="text-white" /></div>
          <div className="w-[59px] bg-[#f3f3f3] border border-l-0 border-[#e4e4e4] rounded-r-[3px] flex items-center justify-center"><Pause size={17} strokeWidth={1} className="text-[#c4c4c4]" /></div>
        </div>
        <div className="flex rounded-[3px] overflow-hidden border border-[#dcdcdc]">
          <div className="w-[29px] bg-[#e1e1e1] flex items-center justify-center">
            <svg width="13" height="13" viewBox="0 0 13 13" fill="none" stroke="#8a8a8a"><path d="M8 1.500L1 6.500l7 5zM11 1v11" /></svg>
          </div>
          <div className="w-[66px] bg-white flex items-center justify-center text-[12px] text-[#a5a5a5]">12:17:10</div>
          <div className="w-[29px] bg-[#e1e1e1] flex items-center justify-center">
            <svg width="13" height="13" viewBox="0 0 13 13" fill="none" stroke="#8a8a8a"><path d="M5 1.500l7 5-7 5zM2 1v11" /></svg>
          </div>
        </div>
      </div>
      <div className="w-[89px] grid grid-cols-3 border border-[#e0e0e0] rounded-[3px]">
        <div className="flex items-center justify-center border-r border-[#e0e0e0]"><Settings size={15} strokeWidth={1} className="text-[#8b8b8b]" /></div>
        <div className="flex items-center justify-center border-r border-[#e0e0e0] bg-[#f2f2f2]"><Minus size={14} strokeWidth={1.200} className="text-[#c9c9c9]" /></div>
        <div className="flex items-center justify-center bg-[#f2f2f2]"><Plus size={15} strokeWidth={1.200} className="text-[#8b8b8b]" /></div>
      </div>
    </div>
  );
}

export default function App() {
  return (
    <div className="w-[1680px] h-[966px] bg-[#2a2a2a] pt-px overflow-hidden font-[Inter,sans-serif]">
      <div className="h-[965px] bg-white rounded-b-[9px] overflow-hidden flex flex-col">
        <TopHeader />
        <div className="h-[639px] shrink-0 flex">
          <SidePanel />
          <MapPanel />
        </div>
        <TabBar />
        <Controls />
        <Timeline />
        <div className="relative mt-[5px] ml-[37px] mr-[15px] h-[7px] rounded-full bg-[#e1e3e8]">
          <div className="absolute left-0 -top-[2.500px] w-[12px] h-[12px] rounded-full bg-[#a9b0ba]" />
        </div>
      </div>
    </div>
  );
}
